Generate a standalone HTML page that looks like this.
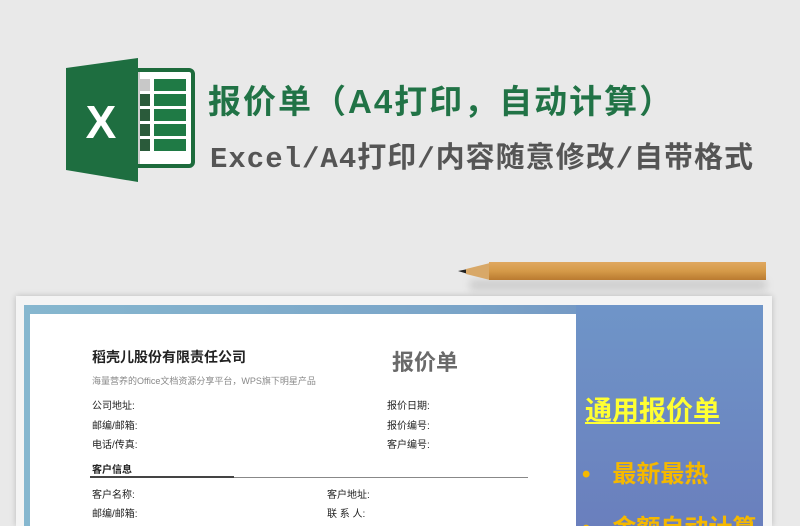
<!DOCTYPE html>
<html><head><meta charset="utf-8"><style>
*{margin:0;padding:0;box-sizing:border-box}
html,body{width:800px;height:526px;overflow:hidden}
body{background:#e9e9e9;position:relative;font-family:"Liberation Sans","Noto Sans CJK SC",sans-serif}
.a{position:absolute}
.t1{left:208px;top:75px;font-size:33px;font-weight:bold;color:#217346;letter-spacing:2px;white-space:nowrap}
.t2{left:210px;top:134px;font-size:29px;color:#555;white-space:nowrap;font-family:"Liberation Mono","Noto Sans CJK SC",monospace;font-weight:bold;letter-spacing:1px}
.doc{font-size:10px;color:#222;white-space:nowrap}
</style></head><body>
<svg class="a" style="left:64px;top:58px" width="132" height="126" viewBox="0 0 132 126">
<rect x="68" y="12" width="61" height="96" rx="4" fill="#fff" stroke="#1d6b3c" stroke-width="4"/>
<g fill="#1f7a45">
<rect x="76" y="21" width="10" height="12" fill="#c8c8c8"/><rect x="90" y="21" width="32" height="12"/>
<rect x="76" y="36" width="10" height="12" fill="#2a5a3a"/><rect x="90" y="36" width="32" height="12"/>
<rect x="76" y="51" width="10" height="12" fill="#2a5a3a"/><rect x="90" y="51" width="32" height="12"/>
<rect x="76" y="66" width="10" height="12" fill="#2a5a3a"/><rect x="90" y="66" width="32" height="12"/>
<rect x="76" y="81" width="10" height="12" fill="#2a5a3a"/><rect x="90" y="81" width="32" height="12"/>
</g>
<rect x="70" y="14" width="6" height="92" fill="#cfcfcf"/>
<polygon points="2,10 74,0 74,124 2,112" fill="#1e6e40"/>
<text x="37" y="80" font-family="Liberation Sans" font-weight="bold" font-size="46" fill="#fff" text-anchor="middle">X</text>
</svg>
<div class="a t1">报价单（A4打印，自动计算）</div>
<div class="a t2">Excel/A4打印/内容随意修改/自带格式</div>
<div class="a" style="left:470px;top:280px;width:296px;height:10px;background:rgba(0,0,0,.12);filter:blur(4px)"></div>
<svg class="a" style="left:456px;top:260px" width="314" height="24">
<defs><linearGradient id="w" x1="0" y1="0" x2="0" y2="1"><stop offset="0" stop-color="#e0a860"/><stop offset=".5" stop-color="#d59a48"/><stop offset="1" stop-color="#b97a30"/></linearGradient></defs>
<polygon points="2,11 12,9 12,14" fill="#222"/>
<polygon points="10,9 34,3 34,20 10,14" fill="#d8a868"/>
<rect x="33" y="2" width="277" height="18" fill="url(#w)"/>
</svg>
<div class="a" style="left:16px;top:296px;width:756px;height:230px;background:#f4f4f4;box-shadow:0 0 6px rgba(0,0,0,.2)"></div>
<div class="a" style="left:24px;top:305px;width:739px;height:221px;background:linear-gradient(90deg,#86b7cf 0%,#7aa4c8 60%,#6d88bf 100%)"></div>
<div class="a" style="left:576px;top:305px;width:187px;height:221px;background:linear-gradient(180deg,#6f95c8,#6a7fbd)"></div>
<div class="a" style="left:30px;top:314px;width:546px;height:212px;background:#fff"></div>
<div class="a doc" style="left:92px;top:347px;font-size:14px;font-weight:bold">稻壳儿股份有限责任公司</div>
<div class="a doc" style="left:392px;top:345px;font-size:22px;font-weight:bold;color:#6a6a6a">报价单</div>
<div class="a doc" style="left:92px;top:374px;font-size:9px;color:#888">海量营养的Office文档资源分享平台，WPS旗下明星产品</div>
<div class="a doc" style="left:92px;top:397px">公司地址:</div>
<div class="a doc" style="left:92px;top:417px">邮编/邮箱:</div>
<div class="a doc" style="left:92px;top:436px">电话/传真:</div>
<div class="a doc" style="left:387px;top:397px">报价日期:</div>
<div class="a doc" style="left:387px;top:417px">报价编号:</div>
<div class="a doc" style="left:387px;top:436px">客户编号:</div>
<div class="a doc" style="left:92px;top:461px;font-weight:bold">客户信息</div>
<div class="a" style="left:90px;top:477px;width:438px;height:1px;background:#888"></div>
<div class="a" style="left:90px;top:476px;width:144px;height:2px;background:#444"></div>
<div class="a doc" style="left:92px;top:486px">客户名称:</div>
<div class="a doc" style="left:92px;top:505px">邮编/邮箱:</div>
<div class="a doc" style="left:327px;top:486px">客户地址:</div>
<div class="a doc" style="left:327px;top:505px">联 系 人:</div>
<div class="a" style="left:585px;top:389px;font-size:27px;font-weight:bold;color:#ffff33;text-decoration:underline;white-space:nowrap">通用报价单</div>
<div class="a" style="left:582px;top:454px;font-size:24px;font-weight:bold;color:#f5b800;white-space:nowrap">•<span style="margin-left:22px">最新最热</span></div>
<div class="a" style="left:582px;top:508px;font-size:24px;font-weight:bold;color:#f5b800;white-space:nowrap">•<span style="margin-left:22px">金额自动计算</span></div>
</body></html>
